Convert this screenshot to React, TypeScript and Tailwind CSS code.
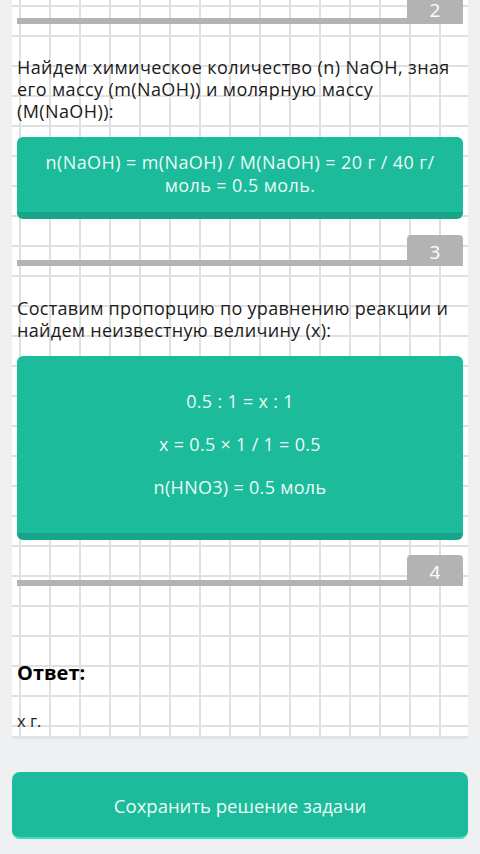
const StepHeader = ({ num, className = "" }: { num: number; className?: string }) => {
  return (
    <div className={`flex flex-col items-end ${className}`}>
      <div className="w-[56px] h-[31px] rounded-[4px] bg-[#b3b3b3] flex items-center justify-center pt-[4px] text-white text-[19px]">
        {num}
      </div>
      <div className="w-full h-[6px] -mt-[6px] bg-[#b3b3b3]" />
    </div>
  );
};

const App = () => {
  return (
    <div
      className="min-h-[854px] bg-[#eef0f2] px-[12px] pb-[15px] overflow-hidden text-[#1b1b1b]"
      style={{ fontFamily: "'Open Sans', 'Noto Sans', sans-serif" }}
    >
      <div className="bg-white border-b-[3px] border-[#e1e3e6] px-[5px] pb-[4px] bg-[linear-gradient(to_right,#e0e0e0_2px,transparent_2px),linear-gradient(to_bottom,#e0e0e0_2px,transparent_2px)] bg-[size:30px_30px] bg-[position:7px_12px]">
        <StepHeader num={2} className="-mt-[7px]" />

        <p className="mt-[32px] text-[18px] tracking-[0.4px] leading-[22px]">
          Найдем химическое количество (n) NaOH, зная его массу (m(NaOH)) и молярную массу (M(NaOH)):
        </p>

        <div className="mt-[15px] rounded-[6px] bg-[#1cbb9b] border-b-[7px] border-[#17a589] pt-[14px] pb-[15px] px-[20px] text-center text-[18px] tracking-[0.4px] leading-[23px] text-[#eafaf5]">
          n(NaOH) = m(NaOH) / M(NaOH) = 20 г / 40 г/ моль = 0.5 моль.
        </div>

        <StepHeader num={3} className="mt-[16px]" />

        <p className="mt-[31px] text-[18px] tracking-[0.3px] leading-[22px]">
          Составим пропорцию по уравнению реакции и найдем неизвестную величину (x):
        </p>

        <div className="mt-[15px] rounded-[6px] bg-[#1cbb9b] border-b-[7px] border-[#17a589] pt-[34px] pb-[34px] px-[20px] flex flex-col gap-[20px] text-center text-[18px] tracking-[0.3px] leading-[23px] text-[#eafaf5]">
          <p>0.5 : 1 = x : 1</p>
          <p>x = 0.5 × 1 / 1 = 0.5</p>
          <p>n(HNO3) = 0.5 моль</p>
        </div>

        <StepHeader num={4} className="mt-[15px]" />

        <h2 className="mt-[74px] text-[20px] leading-[26px] font-bold text-black">Ответ:</h2>
        <p className="mt-[24px] text-[16.5px] leading-[22px]">х г.</p>
      </div>

      <button className="mt-[33px] w-full h-[67px] rounded-[8px] bg-[#1cbb9b] border-b-[2px] border-[#3fdcb8] text-[#eafaf5] text-[18.5px] pt-[2px]">
        Сохранить решение задачи
      </button>
    </div>
  );
};

export default App;
